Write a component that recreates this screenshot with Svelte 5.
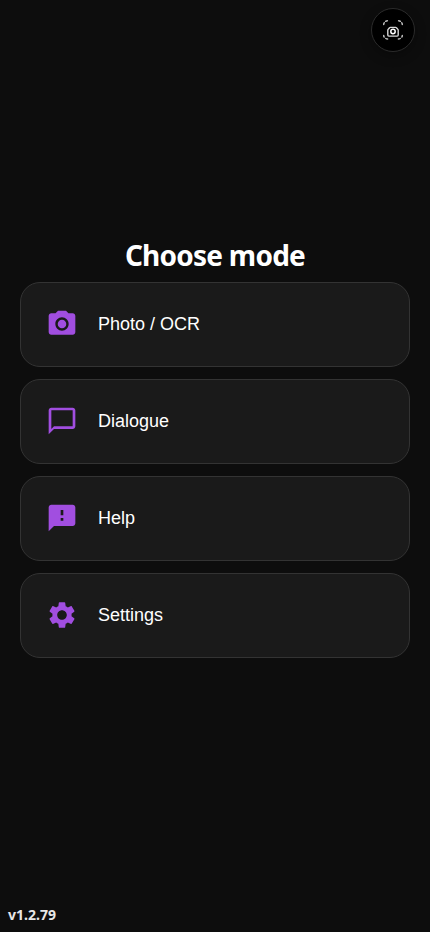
<script>
	const version = 'v1.2.79';

	const modes = [
		{
			id: 'photo',
			label: 'Photo / OCR',
			icon: 'M12 8.8a3.2 3.2 0 1 0 0 6.4 3.2 3.2 0 0 0 0-6.4zM9 2L7.17 4H4c-1.1 0-2 .9-2 2v12c0 1.1.9 2 2 2h16c1.1 0 2-.9 2-2V6c0-1.1-.9-2-2-2h-3.17L15 2H9zm3 15c-2.76 0-5-2.24-5-5s2.24-5 5-5 5 2.24 5 5-2.24 5-5 5z'
		},
		{
			id: 'dialogue',
			label: 'Dialogue',
			icon: 'M20 2H4c-1.1 0-2 .9-2 2v18l4-4h14c1.1 0 2-.9 2-2V4c0-1.1-.9-2-2-2zm0 14H6l-2 2V4h16v12z'
		},
		{
			id: 'help',
			label: 'Help',
			icon: 'M20 2H4c-1.1 0-1.99.9-1.99 2L2 22l4-4h14c1.1 0 2-.9 2-2V4c0-1.1-.9-2-2-2zm-7 12h-2v-2h2v2zm0-4h-2V6h2v4z'
		},
		{
			id: 'settings',
			label: 'Settings',
			icon: 'M19.14 12.94c.04-.3.06-.61.06-.94 0-.32-.02-.64-.07-.94l2.03-1.58c.18-.14.23-.41.12-.61l-1.92-3.32c-.12-.22-.37-.29-.59-.22l-2.39.96c-.5-.38-1.03-.7-1.62-.94l-.36-2.54c-.04-.24-.24-.41-.48-.41h-3.84c-.24 0-.43.17-.47.41l-.36 2.54c-.59.24-1.13.57-1.62.94l-2.39-.96c-.22-.08-.47 0-.59.22L2.74 8.87c-.12.21-.08.47.12.61l2.03 1.58c-.05.3-.09.63-.09.94s.02.64.07.94l-2.03 1.58c-.18.14-.23.41-.12.61l1.92 3.32c.12.22.37.29.59.22l2.39-.96c.5.38 1.03.7 1.62.94l.36 2.54c.05.24.24.41.48.41h3.84c.24 0 .44-.17.47-.41l.36-2.54c.59-.24 1.13-.56 1.62-.94l2.39.96c.22.08.47 0 .59-.22l1.92-3.32c.12-.22.07-.47-.12-.61l-2.01-1.58zM12 15.6c-1.98 0-3.6-1.62-3.6-3.6s1.62-3.6 3.6-3.6 3.6 1.62 3.6 3.6-1.62 3.6-3.6 3.6z'
		}
	];
</script>

<div class="screen">
	<header class="topbar">
		<button class="capture" aria-label="Capture screen">
			<svg viewBox="0 0 24 24" width="24" height="24" fill="none">
				<!-- viewfinder corners -->
				<g class="corners">
					<path d="M2.7 6.4q0-1 .6-1.6M4.6 3.3q.7-.5 1.8-.5" />
					<path d="M21.3 6.4q0-1-.6-1.6M19.4 3.3q-.7-.5-1.8-.5" />
					<path d="M2.7 17.4q0 1 .5 1.6M4.8 20.5q.7.5 1.8.5" />
					<path d="M21.3 17.4q0 1-.5 1.6M19.2 20.5q-.7.5-1.8.5" />
				</g>
				<path class="body" d="M9.4 9.4h5.2q.5 0 .8.4l1.4 1.5q.4.4.4 1v4.8q0 1-1 1H7.8q-1 0-1-1v-4.8q0-.6.4-1l1.4-1.5q.3-.4.8-.4z" />
				<circle class="lens" cx="12" cy="13.5" r="2.2" />
			</svg>
		</button>
	</header>

	<main class="menu">
		<h1>Choose mode</h1>
		<nav class="modes">
			{#each modes as mode (mode.id)}
				<button class="mode">
					<svg viewBox="0 0 24 24" width="32" height="32">
						<path d={mode.icon} />
					</svg>
					<span>{mode.label}</span>
				</button>
			{/each}
		</nav>
	</main>

	<footer class="version">{version}</footer>
</div>

<style>
	:global(body) {
		background: #0d0d0d;
	}

	.screen {
		box-sizing: border-box;
		height: 100vh;
		display: flex;
		flex-direction: column;
		background: #0d0d0d;
		color: #fff;
		font-family: 'Segoe UI', 'Noto Sans', sans-serif;
	}

	.topbar {
		display: flex;
		justify-content: flex-end;
		padding: 8px 15px 0;
	}

	.capture {
		width: 44px;
		height: 44px;
		padding: 0;
		display: flex;
		align-items: center;
		justify-content: center;
		border: 1px solid #2b2b2b;
		border-radius: 50%;
		background: #000;
		box-shadow: 0 4px 12px rgba(0, 0, 0, 0.3);
		cursor: pointer;
	}

	.corners {
		stroke: #bbb;
		stroke-width: 1.5;
		stroke-linecap: round;
	}

	.body {
		stroke: #d8d8d8;
		stroke-width: 1.4;
		stroke-linejoin: round;
	}

	.lens {
		stroke: #fff;
		stroke-width: 1.5;
	}

	.menu {
		flex: 1;
		padding: 184px 20px 0;
	}

	h1 {
		margin: 0 0 8px;
		font-size: 28px;
		line-height: 38px;
		font-weight: 700;
		letter-spacing: -0.75px;
		text-align: center;
	}

	.modes {
		display: flex;
		flex-direction: column;
		gap: 12px;
	}

	.mode {
		box-sizing: border-box;
		height: 85px;
		display: flex;
		align-items: center;
		gap: 20px;
		padding: 0 25px;
		border: 1px solid #333;
		border-radius: 20px;
		background: #1a1a1a;
		color: #fff;
		font-family: 'Liberation Sans', Arial, sans-serif;
		font-size: 18px;
		cursor: pointer;
	}

	.mode svg {
		margin-bottom: 2px;
		fill: #a14ee0;
	}

	.version {
		padding: 0 8px 8px;
		font-size: 14px;
		line-height: 18px;
		font-weight: 700;
		color: #e7e7e7;
	}
</style>
